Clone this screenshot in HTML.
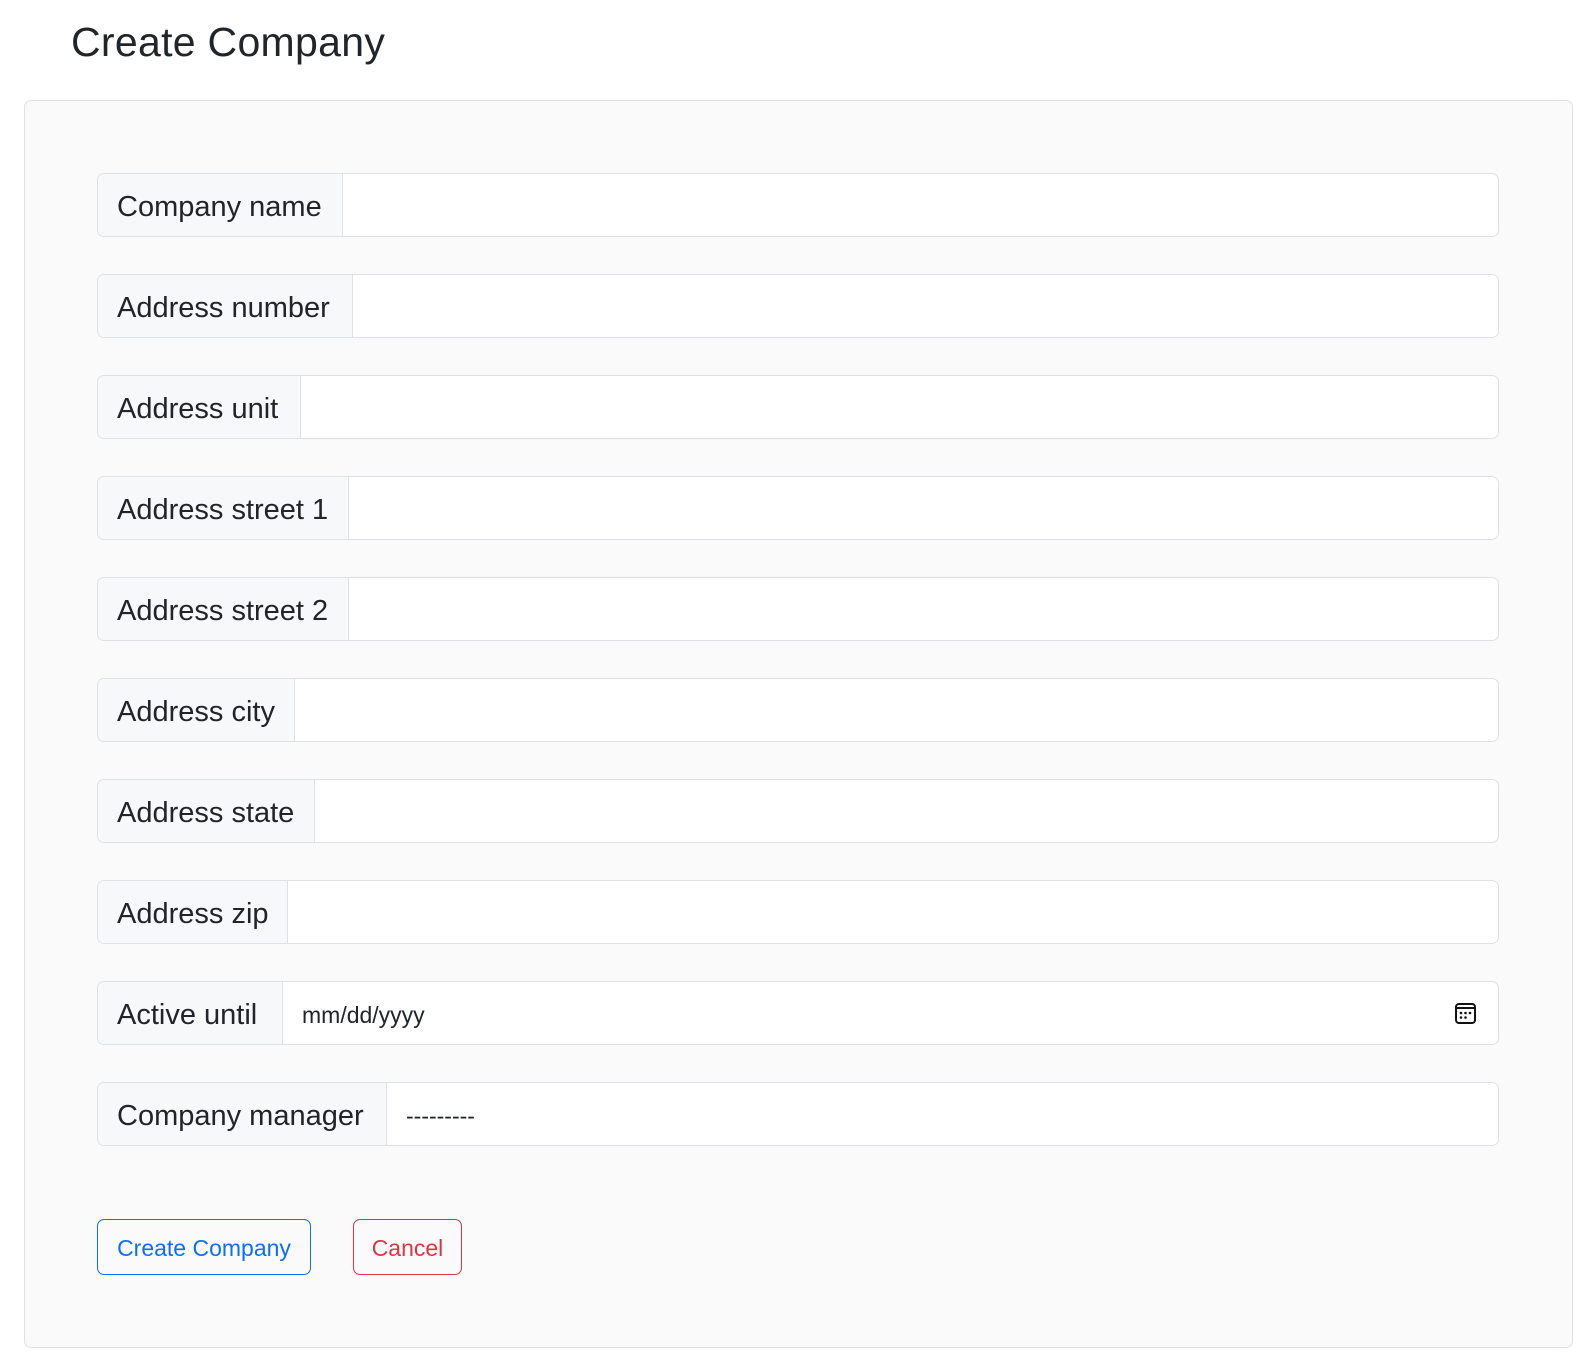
<!DOCTYPE html>
<html><head><style>
body{margin:0;background:#fff;font-family:"Liberation Sans",sans-serif;color:#212529;width:1591px;height:1366px;position:relative;overflow:hidden}
h1{position:absolute;left:71px;top:19px;margin:0;font-size:41px;font-weight:normal;letter-spacing:0.3px}
.card{position:absolute;left:24px;top:100px;width:1549px;height:1248px;background:#fafafa;border:1px solid #dee2e6;border-radius:7px;box-sizing:border-box}
.row{position:absolute;left:97px;width:1402px;height:64px;border:1px solid #dee2e6;border-radius:7px;background:#fff;box-sizing:border-box;display:flex;overflow:hidden}
.lab{background:#f7f8f9;border-right:1px solid #dee2e6;font-size:29px;line-height:67px;height:62px;padding-left:19px;box-sizing:border-box;white-space:nowrap}
.val{font-size:23px;line-height:67px;padding-left:19px}
.btn{position:absolute;top:1219px;height:56px;border:1.5px solid;border-radius:7px;box-sizing:border-box;font-size:23px;line-height:57px;text-align:center}
</style></head><body>
<h1>Create Company</h1>
<div class="card"></div>
<div class="row" style="top:173px"><div class="lab" style="width:245px">Company name</div></div>
<div class="row" style="top:274px"><div class="lab" style="width:255px">Address number</div></div>
<div class="row" style="top:375px"><div class="lab" style="width:203px">Address unit</div></div>
<div class="row" style="top:476px"><div class="lab" style="width:251px">Address street 1</div></div>
<div class="row" style="top:577px"><div class="lab" style="width:251px">Address street 2</div></div>
<div class="row" style="top:678px"><div class="lab" style="width:197px">Address city</div></div>
<div class="row" style="top:779px"><div class="lab" style="width:217px">Address state</div></div>
<div class="row" style="top:880px"><div class="lab" style="width:190px">Address zip</div></div>
<div class="row" style="top:981px"><div class="lab" style="width:185px">Active until</div><div class="val">mm/dd/yyyy</div>
<svg style="position:absolute;right:22px;top:21px" width="21" height="21" viewBox="0 0 21 21"><rect x="1" y="1" width="19" height="19" rx="3" fill="none" stroke="#111" stroke-width="2"/><line x1="1" y1="5" x2="20" y2="5" stroke="#111" stroke-width="2"/><g fill="#111"><circle cx="6" cy="10" r="1.3"/><circle cx="10.5" cy="10" r="1.3"/><circle cx="15" cy="10" r="1.3"/><circle cx="6" cy="14.5" r="1.3"/><circle cx="10.5" cy="14.5" r="1.3"/></g></svg></div>
<div class="row" style="top:1082px"><div class="lab" style="width:289px">Company manager</div><div class="val">---------</div></div>
<div class="btn" style="left:97px;width:214px;color:#0d6efd;border-color:#0d6efd">Create Company</div>
<div class="btn" style="left:353px;width:109px;color:#dc3545;border-color:#dc3545">Cancel</div>
</body></html>
